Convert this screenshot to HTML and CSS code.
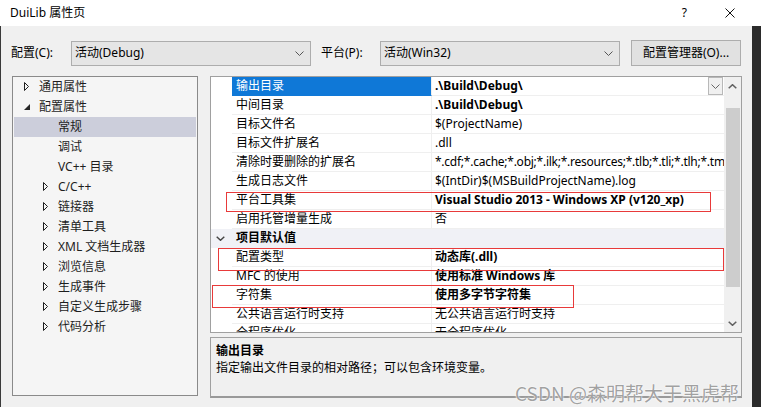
FILE: index.html
```html
<!DOCTYPE html>
<html lang="zh-CN">
<head>
<meta charset="utf-8">
<title>DuiLib 属性页</title>
<link rel="stylesheet" href="styles.css">
</head>
<body>
<div class="titlebar">
  <span class="title">DuiLib 属性页</span>
  <span class="help">?</span>
  <svg class="close" width="10" height="10" viewBox="0 0 10 10"><path d="M0.5 0.5 L9.5 9.5 M9.5 0.5 L0.5 9.5" stroke="#111" stroke-width="1" fill="none"/></svg>
</div>
<div class="frame">
  <div class="client">
    <div class="toolbar">
      <span class="lbl lbl-config">配置(C):</span>
      <div class="combo combo-config"><span>活动(Debug)</span><svg width="9" height="5" viewBox="0 0 9 5"><path d="M0.5 0.5 L4.5 4.5 L8.5 0.5" stroke="#555" fill="none"/></svg></div>
      <span class="lbl lbl-platform">平台(P):</span>
      <div class="combo combo-platform"><span>活动(Win32)</span><svg width="9" height="5" viewBox="0 0 9 5"><path d="M0.5 0.5 L4.5 4.5 L8.5 0.5" stroke="#555" fill="none"/></svg></div>
      <div class="btn">配置管理器(O)...</div>
    </div>
    <div class="panes">
      <div class="tree">
        <div class="node l1"><svg class="exp" width="6" height="10" viewBox="0 0 6 10"><path d="M0.5 0.5 L4.5 4.5 L0.5 8.5Z" fill="none" stroke="#1e1e1e"/></svg><span>通用属性</span></div>
        <div class="node l1"><svg class="exp" width="6" height="10" viewBox="0 0 6 10"><path d="M6 2 L6 8 L0 8Z" fill="#262626"/></svg><span>配置属性</span></div>
        <div class="node l2 sel"><span class="noexp"></span><span>常规</span></div>
        <div class="node l2"><span class="noexp"></span><span>调试</span></div>
        <div class="node l2"><span class="noexp"></span><span>VC++ 目录</span></div>
        <div class="node l2"><svg class="exp" width="6" height="10" viewBox="0 0 6 10"><path d="M0.5 0.5 L4.5 4.5 L0.5 8.5Z" fill="none" stroke="#1e1e1e"/></svg><span>C/C++</span></div>
        <div class="node l2"><svg class="exp" width="6" height="10" viewBox="0 0 6 10"><path d="M0.5 0.5 L4.5 4.5 L0.5 8.5Z" fill="none" stroke="#1e1e1e"/></svg><span>链接器</span></div>
        <div class="node l2"><svg class="exp" width="6" height="10" viewBox="0 0 6 10"><path d="M0.5 0.5 L4.5 4.5 L0.5 8.5Z" fill="none" stroke="#1e1e1e"/></svg><span>清单工具</span></div>
        <div class="node l2"><svg class="exp" width="6" height="10" viewBox="0 0 6 10"><path d="M0.5 0.5 L4.5 4.5 L0.5 8.5Z" fill="none" stroke="#1e1e1e"/></svg><span>XML 文档生成器</span></div>
        <div class="node l2"><svg class="exp" width="6" height="10" viewBox="0 0 6 10"><path d="M0.5 0.5 L4.5 4.5 L0.5 8.5Z" fill="none" stroke="#1e1e1e"/></svg><span>浏览信息</span></div>
        <div class="node l2"><svg class="exp" width="6" height="10" viewBox="0 0 6 10"><path d="M0.5 0.5 L4.5 4.5 L0.5 8.5Z" fill="none" stroke="#1e1e1e"/></svg><span>生成事件</span></div>
        <div class="node l2"><svg class="exp" width="6" height="10" viewBox="0 0 6 10"><path d="M0.5 0.5 L4.5 4.5 L0.5 8.5Z" fill="none" stroke="#1e1e1e"/></svg><span>自定义生成步骤</span></div>
        <div class="node l2"><svg class="exp" width="6" height="10" viewBox="0 0 6 10"><path d="M0.5 0.5 L4.5 4.5 L0.5 8.5Z" fill="none" stroke="#1e1e1e"/></svg><span>代码分析</span></div>
      </div>
      <div class="rightcol">
        <div class="grid">
          <div class="rows">
            <div class="row selected"><span class="gut"></span><span class="name">输出目录</span><span class="val b">.\Build\Debug\<span class="ddbtn"><svg width="9" height="5" viewBox="0 0 9 5"><path d="M0.5 0.5 L4.5 4.5 L8.5 0.5" stroke="#666" fill="none"/></svg></span></span></div>
            <div class="row"><span class="gut"></span><span class="name">中间目录</span><span class="val b">.\Build\Debug\</span></div>
            <div class="row"><span class="gut"></span><span class="name">目标文件名</span><span class="val">$(ProjectName)</span></div>
            <div class="row"><span class="gut"></span><span class="name">目标文件扩展名</span><span class="val">.dll</span></div>
            <div class="row"><span class="gut"></span><span class="name">清除时要删除的扩展名</span><span class="val val-clip">*.cdf;*.cache;*.obj;*.ilk;*.resources;*.tlb;*.tli;*.tlh;*.tm</span></div>
            <div class="row"><span class="gut"></span><span class="name">生成日志文件</span><span class="val">$(IntDir)$(MSBuildProjectName).log</span></div>
            <div class="row"><span class="gut"></span><span class="name">平台工具集</span><span class="val b">Visual Studio 2013 - Windows XP (v120_xp)</span></div>
            <div class="row"><span class="gut"></span><span class="name">启用托管增量生成</span><span class="val">否</span></div>
            <div class="row cat"><span class="gut"><svg width="9" height="5" viewBox="0 0 9 5"><path d="M0.7 0.7 L4.5 4.3 L8.3 0.7" stroke="#444" stroke-width="1.4" fill="none"/></svg></span><span class="name">项目默认值</span><span class="val"></span></div>
            <div class="row"><span class="gut"></span><span class="name">配置类型</span><span class="val b">动态库(.dll)</span></div>
            <div class="row"><span class="gut"></span><span class="name">MFC 的使用</span><span class="val b">使用标准 Windows 库</span></div>
            <div class="row"><span class="gut"></span><span class="name">字符集</span><span class="val b">使用多字节字符集</span></div>
            <div class="row"><span class="gut"></span><span class="name">公共语言运行时支持</span><span class="val">无公共语言运行时支持</span></div>
            <div class="row"><span class="gut"></span><span class="name">全程序优化</span><span class="val">无全程序优化</span></div>
          </div>
          <div class="vscroll">
            <div class="sbtn sbtn-up"><svg width="9" height="5" viewBox="0 0 9 5"><path d="M0.7 4.3 L4.5 0.7 L8.3 4.3" stroke="#606060" stroke-width="1.5" fill="none"/></svg></div>
            <div class="thumb"></div>
            <div class="track"></div>
            <div class="sbtn sbtn-down"><svg width="9" height="5" viewBox="0 0 9 5"><path d="M0.7 0.7 L4.5 4.3 L8.3 0.7" stroke="#606060" stroke-width="1.5" fill="none"/></svg></div>
          </div>
          <div class="mark mark-toolset"></div>
          <div class="mark mark-type"></div>
          <div class="mark mark-charset"></div>
        </div>
        <div class="desc">
          <div class="desc-title">输出目录</div>
          <div class="desc-text">指定输出文件目录的相对路径；可以包含环境变量。</div>
        </div>
      </div>
    </div>
    <div class="watermark">CSDN @森明帮大于黑虎帮</div>
  </div>
  <div class="strip"></div>
</div>
</body>
</html>
```
FILE: styles.css
```css
* { box-sizing: border-box; }
html, body { margin: 0; padding: 0; }
body {
  width: 761px;
  height: 407px;
  overflow: hidden;
  background: #f0f0f0;
  color: #000;
  font-family: "Noto Sans", "Noto Sans CJK SC", sans-serif;
  font-size: 12px;
  line-height: 16px;
}

.titlebar {
  height: 26px;
  background: #fff;
  display: flex;
  align-items: center;
  padding-left: 10px;
}
.title { flex: 1; }
.help { margin-right: 38px; font-size: 12px; }
.close { margin-right: 26px; }

.frame { display: flex; height: 381px; }
.client {
  position: relative;
  width: 752px;
  height: 381px;
  border-left: 1px solid #3a3a3a;
  background: #f0f0f0;
}
.strip { flex: 1; background: #2b2b2b; }

.toolbar {
  display: flex;
  align-items: center;
  height: 26px;
  margin-top: 14px;
  padding-left: 10px;
}
.lbl { white-space: nowrap; }
.lbl-config { width: 60px; }
.lbl-platform { width: 59px; margin-left: 10px; }
.combo {
  height: 25px;
  background: #e5e5e5;
  border: 1px solid #adadad;
  display: flex;
  align-items: center;
  justify-content: space-between;
  padding: 0 6px 0 3px;
}
.combo-config { width: 240px; }
.combo-platform { width: 240px; }
.btn {
  width: 110px;
  height: 26px;
  margin-left: 11px;
  background: #e1e1e1;
  border: 1px solid #adadad;
  display: flex;
  align-items: center;
  justify-content: center;
}

.panes {
  display: flex;
  gap: 12px;
  margin-top: 10px;
  padding-left: 11px;
}
.tree {
  width: 186px;
  height: 320px;
  border: 1px solid #8a8a8a;
  background: #f5f5f5;
  color: #1e1e1e;
}
.node {
  height: 20px;
  display: flex;
  align-items: center;
  margin: 0 0 0 1px;
  width: 182px;
}
.node.l1 { padding-left: 10px; }
.node.l2 { padding-left: 29px; }
.node .exp, .node .noexp { width: 15px; flex: none; }
.node .exp { padding-right: 9px; }
.node.sel { background: #cccedb; }

.rightcol {
  width: 532px;
  display: flex;
  flex-direction: column;
  gap: 4px;
}
.grid {
  position: relative;
  height: 257px;
  border: 1px solid #a0a0a0;
  background: #fff;
  display: flex;
  overflow: hidden;
}
.rows { width: 513px; }
.row {
  display: grid;
  grid-template-columns: 21px 200px 292px;
  height: 19px;
}
.row > span {
  display: flex;
  align-items: center;
  white-space: nowrap;
  overflow: hidden;
}
.gut { background: #fff; justify-content: center; }
.name {
  padding-left: 4px;
  border-bottom: 1px solid #efefef;
  border-right: 1px solid #efefef;
}
.val {
  padding-left: 3px;
  border-bottom: 1px solid #efefef;
  position: relative;
}
.val-clip { letter-spacing: -0.25px; }
.b { font-weight: bold; }
.selected .name { background: #0f78d7; color: #fff; border-bottom-color: #0f78d7; }
.ddbtn {
  position: absolute;
  right: 1px;
  top: 0;
  width: 15px;
  height: 18px;
  border: 1px solid #b8b8b8;
  background: #f0f0f0;
  display: flex;
  align-items: center;
  justify-content: center;
}
.cat > span { background: #f0f1f6; border-color: #f0f1f6; font-weight: bold; }
.cat .gut { justify-content: flex-start; padding-left: 5px; }

.vscroll {
  width: 17px;
  background: #f0f0f0;
  display: flex;
  flex-direction: column;
}
.sbtn { display: flex; justify-content: center; align-items: center; flex: none; }
.sbtn-up { height: 31px; padding-bottom: 13px; }
.thumb { height: 179px; margin: 0 1px 0 2px; background: #cdcdcd; }
.track { flex: 1; }
.sbtn-down { height: 17px; padding-bottom: 1px; }

.mark { position: absolute; border: 1px solid #e83a3a; }
.mark-toolset { left: 15px; top: 115px; width: 485px; height: 20px; }
.mark-type { left: 7px; top: 171px; width: 506px; height: 23px; }
.mark-charset { left: 1px; top: 208px; width: 362px; height: 23px; }

.desc {
  height: 61px;
  border: 1px solid #a0a0a0;
  border-bottom: 2px solid #999;
  background: #f0f0f0;
  padding: 4px 0 0 5px;
  line-height: 17px;
}
.desc-title { font-weight: bold; }

.watermark {
  position: absolute;
  left: 514px;
  top: 355px;
  font-family: "Noto Sans CJK SC", sans-serif;
  font-size: 19px;
  line-height: 24px;
  color: rgba(125, 125, 125, 0.72);
  text-shadow: 0 0 2px #fff, 0 0 1px #fff;
  white-space: nowrap;
}
```
